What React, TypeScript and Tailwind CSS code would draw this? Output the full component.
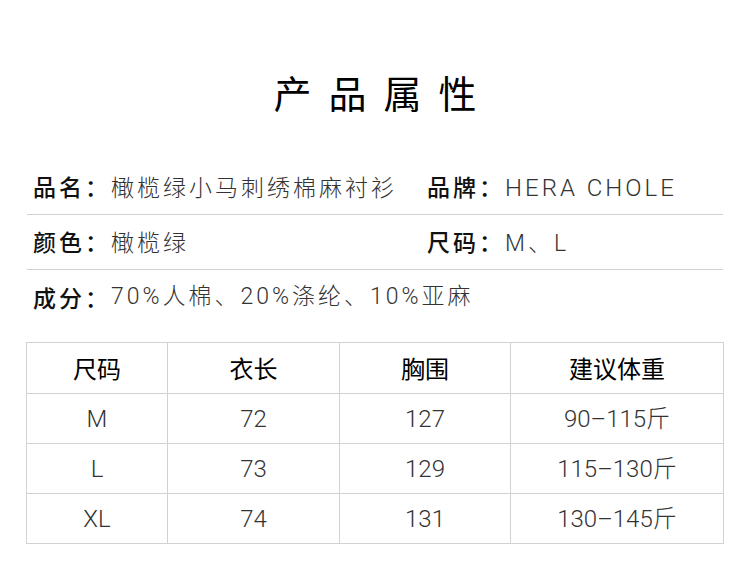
const cjk = "font-['Noto_Sans_CJK_SC',sans-serif]"
const thin = "font-['Roboto','Noto_Sans_CJK_SC',sans-serif] font-light text-[#333]"

const rows = [
  { size: "M", length: "72", chest: "127", weight: "90–115斤" },
  { size: "L", length: "73", chest: "129", weight: "115–130斤" },
  { size: "XL", length: "74", chest: "131", weight: "130–145斤" },
]

function Label({ children }: { children: React.ReactNode }) {
  return <span className="font-medium text-[#111]">{children}</span>
}

function Value({ children }: { children: React.ReactNode }) {
  return <span className={thin}>{children}</span>
}

export default function App() {
  return (
    <div className={`w-[750px] h-[580px] bg-white ${cjk}`}>
      {/* title */}
      <div className="h-[161px] pt-[68px] text-center">
        <h1 className="pl-[17px] text-[38px] leading-[48px] tracking-[17px] font-normal text-black">
          产品属性
        </h1>
      </div>

      {/* attributes */}
      <div className="ml-[27px] w-[696px] text-[23px] leading-[30px] tracking-[3px]">
        <div className="flex h-[54px] items-center border-b border-[#d2d2d2] pl-[6px]">
          <div className="w-[394px]">
            <Label>品名：</Label>
            <Value>橄榄绿小马刺绣棉麻衬衫</Value>
          </div>
          <div>
            <Label>品牌：</Label>
            <Value>
              <span className="text-[24px]">HERA CHOLE</span>
            </Value>
          </div>
        </div>
        <div className="flex h-[55px] items-center border-b border-[#d2d2d2] pl-[6px]">
          <div className="w-[394px]">
            <Label>颜色：</Label>
            <Value>橄榄绿</Value>
          </div>
          <div>
            <Label>尺码：</Label>
            <Value>M、L</Value>
          </div>
        </div>
        <div className="flex h-[54px] items-center pl-[6px]">
          <Label>成分：</Label>
          <Value>70%人棉、20%涤纶、10%亚麻</Value>
        </div>
      </div>

      {/* size table */}
      <table className="mt-[18px] ml-[26px] w-[697px] table-fixed border-collapse text-[24px] leading-[30px]">
        <colgroup>
          <col className="w-[141px]" />
          <col className="w-[172px]" />
          <col className="w-[171px]" />
          <col className="w-[213px]" />
        </colgroup>
        <thead>
          <tr className="h-[51px]">
            {["尺码", "衣长", "胸围", "建议体重"].map((h) => (
              <th key={h} className="border border-[#d2d2d2] text-center font-normal text-black">
                {h}
              </th>
            ))}
          </tr>
        </thead>
        <tbody>
          {rows.map((r) => (
            <tr key={r.size} className="h-[50px]">
              <td className={`border border-[#d2d2d2] text-center ${thin}`}>{r.size}</td>
              <td className={`border border-[#d2d2d2] text-center ${thin}`}>{r.length}</td>
              <td className={`border border-[#d2d2d2] text-center ${thin}`}>{r.chest}</td>
              <td className={`border border-[#d2d2d2] text-center ${thin}`}>{r.weight}</td>
            </tr>
          ))}
        </tbody>
      </table>
    </div>
  )
}
